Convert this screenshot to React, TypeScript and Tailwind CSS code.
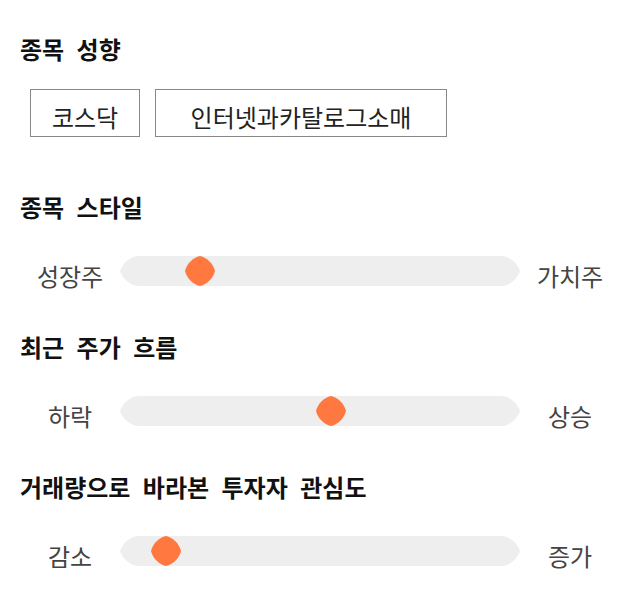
import React from "react";

const FONT = { fontFamily: '"Noto Sans CJK KR", "Noto Sans", sans-serif' };

function Thumb({ left }: { left: number }) {
  return (
    <svg
      width="30"
      height="30"
      viewBox="0 0 30 30"
      className="absolute top-0"
      style={{ left }}
    >
      <path
        d="M15 0 C22 1.5 28.5 8 30 15 C28.5 22 22 28.5 15 30 C8 28.5 1.5 22 0 15 C1.5 8 8 1.5 15 0 Z"
        fill="#ff7840"
      />
    </svg>
  );
}

function Track({ thumb }: { thumb: number }) {
  return (
    <div className="relative w-[400px] h-[30px] shrink-0">
      <svg width="400" height="30" viewBox="0 0 400 30" className="absolute inset-0">
        <path
          d="M19 0 L381 0 C391 0 398 9 400 15 C398 21 391 30 381 30 L19 30 C9 30 2 21 0 15 C2 9 9 0 19 0 Z"
          fill="#eeeeee"
        />
      </svg>
      <Thumb left={thumb} />
    </div>
  );
}

function Heading({ children }: { children: React.ReactNode }) {
  return (
    <h2 className="text-[24px] leading-[33px] font-bold text-[#111111] [word-spacing:7px] whitespace-nowrap">
      {children}
    </h2>
  );
}

function SliderRow({ left, right, thumb }: { left: string; right: string; thumb: number }) {
  return (
    <div className="flex items-center h-[30px] mt-[33px]">
      <div className="relative top-[5px] w-[100px] text-center text-[24px] leading-[30px] text-[#444444]">{left}</div>
      <Track thumb={thumb} />
      <div className="relative top-[5px] w-[100px] text-center text-[24px] leading-[30px] text-[#444444]">{right}</div>
    </div>
  );
}

export default function App() {
  return (
    <div className="w-[640px] h-[606px] bg-white px-5 pt-[32px]" style={FONT}>
      <Heading>종목 성향</Heading>
      <div className="flex gap-[15px] ml-[10px] mt-[24px]">
        <div className="w-[110px] h-[48px] border border-[#888888] text-center text-[24px] leading-[24px] pt-[15px] text-[#222222]">
          코스닥
        </div>
        <div className="w-[292px] h-[48px] border border-[#888888] text-center text-[24px] leading-[24px] pt-[15px] text-[#222222] whitespace-nowrap">
          인터넷과카탈로그소매
        </div>
      </div>

      <div className="mt-[53px]">
        <Heading>종목 스타일</Heading>
      </div>
      <SliderRow left="성장주" right="가치주" thumb={65} />

      <div className="mt-[44px]">
        <Heading>최근 주가 흐름</Heading>
      </div>
      <SliderRow left="하락" right="상승" thumb={196} />

      <div className="mt-[44px]">
        <Heading>거래량으로 바라본 투자자 관심도</Heading>
      </div>
      <SliderRow left="감소" right="증가" thumb={31} />
    </div>
  );
}
